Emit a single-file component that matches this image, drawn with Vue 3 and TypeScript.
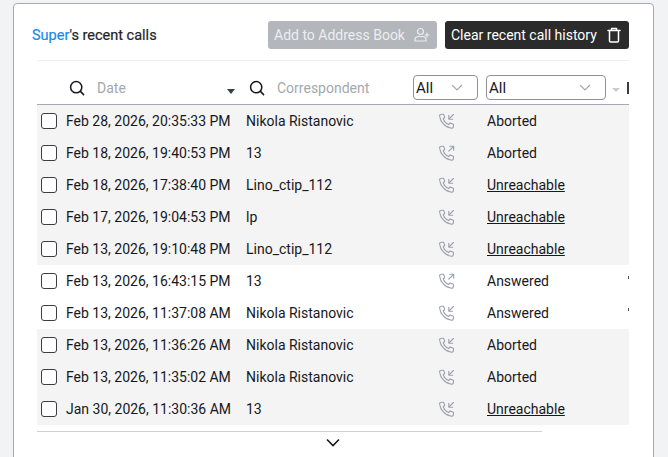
<template>
  <div class="page">
    <div class="card">
      <div class="head">
        <div class="title"><span class="user">Super</span>'s recent calls</div>
        <div class="actions">
          <button class="btn btn-add">
            Add to Address Book
            <svg width="18" height="18" viewBox="0 0 18 18" fill="none" stroke="currentColor" stroke-width="1.2" stroke-linecap="round">
              <circle cx="7.5" cy="5.5" r="3" />
              <path d="M2 15v-1.2c0-2 1.6-3.3 3.6-3.3h3.8c2 0 3.6 1.3 3.6 3.3V15z" />
              <path d="M14 7v4M12 9h4" />
            </svg>
          </button>
          <button class="btn btn-clear">
            Clear recent call history
            <svg width="18" height="18" viewBox="0 0 18 18" fill="none" stroke="currentColor" stroke-width="1.5" stroke-linejoin="round" stroke-linecap="round">
              <path d="M3 4.5h12M6.5 4.5V2.5h5v2M4.5 4.5v10.2c0 .7.5 1.3 1.2 1.3h6.6c.7 0 1.2-.6 1.2-1.3V4.5" />
            </svg>
          </button>
        </div>
      </div>

      <div class="table">
        <div class="filters">
          <div class="col-date filter">
            <svg class="search" width="16" height="16" viewBox="0 0 16 16" fill="none" stroke="#16181c" stroke-width="1.5" stroke-linecap="round">
              <circle cx="7.2" cy="7.2" r="5.6" />
              <path d="M11.4 11.400l3.200 3.200" />
            </svg>
            <span class="placeholder">Date</span>
            <span class="caret dark"></span>
          </div>
          <div class="col-name filter">
            <svg class="search" width="16" height="16" viewBox="0 0 16 16" fill="none" stroke="#16181c" stroke-width="1.5" stroke-linecap="round">
              <circle cx="7.2" cy="7.2" r="5.6" />
              <path d="M11.4 11.400l3.200 3.200" />
            </svg>
            <span class="placeholder">Correspondent</span>
          </div>
          <div class="select select-dir">
            All
            <svg width="12" height="7" viewBox="0 0 12 7" fill="none" stroke="#a4a8ae" stroke-width="1.2"><path d="M1 1l5 5 5-5" /></svg>
          </div>
          <div class="select select-status">
            All
            <svg width="12" height="7" viewBox="0 0 12 7" fill="none" stroke="#a4a8ae" stroke-width="1.2"><path d="M1 1l5 5 5-5" /></svg>
          </div>
          <span class="caret light"></span>
          <span class="cut-bar"></span>
        </div>

        <div v-for="row in rows" :key="row.date" class="row" :class="{ shaded: row.status !== 'Answered' }">
          <span class="check"></span>
          <span class="date">{{ row.date }}</span>
          <span class="name">{{ row.name }}</span>
          <span class="dir">
            <svg width="18" height="18" viewBox="0 0 18 18" fill="none" stroke="#9da1a8" stroke-width="1.1" stroke-linecap="round" stroke-linejoin="round">
              <path d="M3.4 2.200h2.200l1.200 3.400-1.600 1.200c.8 2.400 2.600 4.600 5.400 5.800l1.400-1.700 3.400 1.300v2.300c0 1-.9 1.800-1.900 1.700C7.400 15.700 2.200 10.100 1.600 4 1.500 3 2.400 2.200 3.400 2.200z" />
              <path v-if="row.out" d="M10.800 7.200L15.500 2.500M11.800 2.300h3.900v3.900" />
              <path v-else d="M15.500 2.500L10.800 7.200M10.800 3.300v3.900h3.900" />
            </svg>
          </span>
          <span class="status" :class="{ link: row.status === 'Unreachable' }">{{ row.status }}</span>
          <span v-if="row.status === 'Answered'" class="tick"></span>
        </div>
      </div>

      <div class="foot">
        <div class="foot-line"></div>
        <svg width="14" height="9" viewBox="0 0 14 9" fill="none" stroke="#16181c" stroke-width="1.6"><path d="M1 1.500l6 6 6-6" /></svg>
      </div>
    </div>
  </div>
</template>

<script setup lang="ts">
interface CallRow {
  date: string;
  name: string;
  out: boolean;
  status: string;
}

const rows: CallRow[] = [
  { date: 'Feb 28, 2026, 20:35:33 PM', name: 'Nikola Ristanovic', out: false, status: 'Aborted' },
  { date: 'Feb 18, 2026, 19:40:53 PM', name: '13', out: true, status: 'Aborted' },
  { date: 'Feb 18, 2026, 17:38:40 PM', name: 'Lino_ctip_112', out: false, status: 'Unreachable' },
  { date: 'Feb 17, 2026, 19:04:53 PM', name: 'lp', out: false, status: 'Unreachable' },
  { date: 'Feb 13, 2026, 19:10:48 PM', name: 'Lino_ctip_112', out: false, status: 'Unreachable' },
  { date: 'Feb 13, 2026, 16:43:15 PM', name: '13', out: true, status: 'Answered' },
  { date: 'Feb 13, 2026, 11:37:08 AM', name: 'Nikola Ristanovic', out: false, status: 'Answered' },
  { date: 'Feb 13, 2026, 11:36:26 AM', name: 'Nikola Ristanovic', out: false, status: 'Aborted' },
  { date: 'Feb 13, 2026, 11:35:02 AM', name: 'Nikola Ristanovic', out: false, status: 'Aborted' },
  { date: 'Jan 30, 2026, 11:30:36 AM', name: '13', out: false, status: 'Unreachable' },
];
</script>

<style>
html, body { margin: 0; height: 100%; overflow: hidden; background: #f2f3f5; }
</style>

<style scoped>
.page { height: 457px; padding: 3px 14px 0 13px; box-sizing: border-box; overflow: hidden; font-family: Roboto, sans-serif; font-size: 14px; color: #16181c; }
.card { width: 641px; height: 470px; box-sizing: border-box; background: #fff; border: 1px solid #a6a9b0; border-radius: 4px; padding: 17px 23px 0; }
.head { display: flex; align-items: center; justify-content: space-between; height: 28px; padding-bottom: 11px; border-bottom: 1px solid #eceef0; width: 592px; }
.title { margin-left: -5px; font-size: 14.5px; color: #22252a; -webkit-text-stroke: 0.2px #22252a; }
.user { color: #1e88e5; -webkit-text-stroke: 0.2px #1e88e5; }
.actions { display: flex; gap: 8px; }
.btn { display: flex; align-items: center; justify-content: space-between; height: 28px; border: 0; border-radius: 3px; padding: 0 6px; font-family: inherit; font-size: 14px; color: #fff; }
.btn-add { width: 169px; background: #b3b6bb; color: #eceef0; }
.btn-clear { width: 184px; background: #2b2b2b; }
.table { width: 592px; overflow: hidden; }
.filters { display: flex; align-items: center; position: relative; height: 44px; padding-top: 10px; box-sizing: border-box; border-bottom: 1px solid #a6a9b0; }
.filter { display: flex; align-items: center; height: 100%; }
.col-date { width: 209px; padding-left: 32px; box-sizing: border-box; }
.col-name { width: 167px; padding-left: 3px; box-sizing: border-box; }
.search { flex: none; margin-right: 11px; }
.col-date .search { margin-right: 12px; }
.col-name .search { margin-right: 12px; }
.placeholder { color: #a4a8ae; }
.caret { width: 0; height: 0; border-left: 4px solid transparent; border-right: 4px solid transparent; }
.caret.dark { position: absolute; left: 190px; top: 28px; border-top: 5px solid #3a3d42; }
.caret.light { margin: 5px 0 0 6px; border-top: 4px solid #c9ccd0; }
.select { display: flex; align-items: center; justify-content: space-between; box-sizing: border-box; height: 25px; padding: 0 14px 0 2px; border: 1px solid #8f9298; border-radius: 4px; font-size: 15px; }
.select-dir { width: 65px; margin-right: 8px; }
.select-status { width: 120px; }
.cut-bar { position: absolute; left: 590px; top: 21px; width: 2px; height: 12px; background: #3a3d42; }
.row { display: flex; align-items: center; height: 32px; position: relative; }
.row.shaded { background: #f4f4f4; }
.check { flex: none; box-sizing: border-box; width: 16px; height: 16px; margin: 0 9px 0 4px; border: 1.3px solid #3a3d42; border-radius: 3px; background: #fff; }
.date { width: 180px; flex: none; white-space: nowrap; }
.name { width: 192px; flex: none; }
.dir { width: 49px; flex: none; display: flex; }
.status.link { text-decoration: underline; }
.tick { position: absolute; right: 0; top: 11px; width: 1px; height: 3px; background: #555; }
.foot { width: 592px; margin-top: 6px; display: flex; flex-direction: column; align-items: center; gap: 6px; }
.foot-line { align-self: flex-start; width: 505px; height: 1px; background: #cfd1d4; }
</style>
